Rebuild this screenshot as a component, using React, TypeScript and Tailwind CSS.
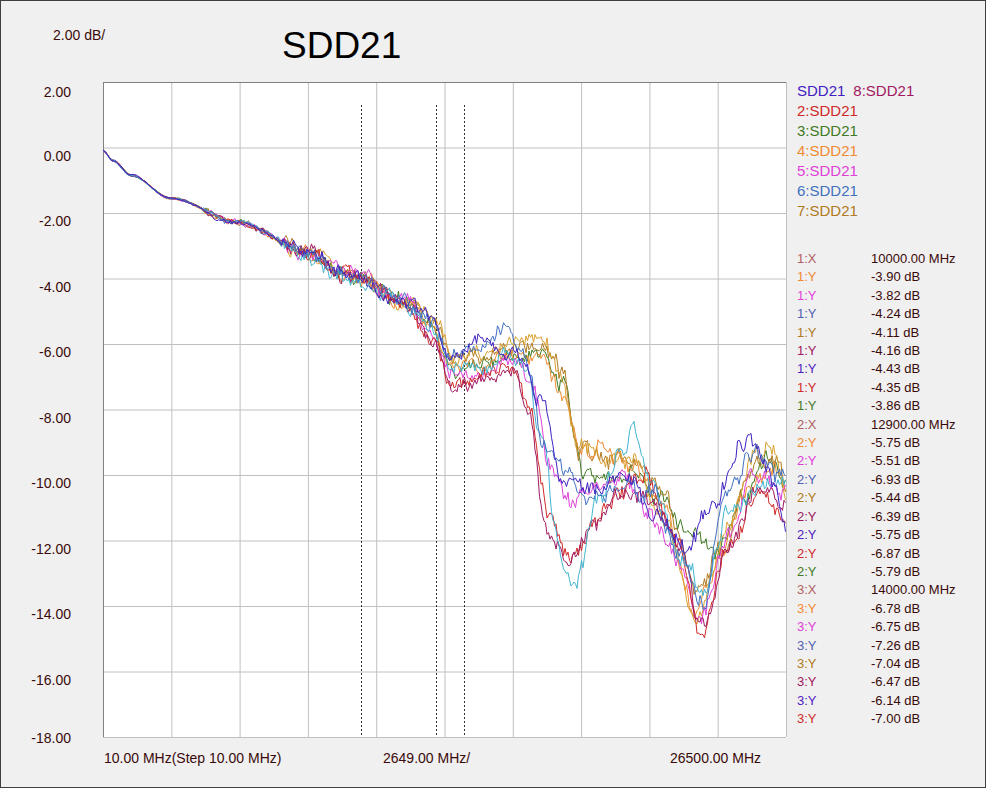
import React from "react"

const W = 683
const H = 655
const yOf = (db: number) => (2 - db) * 32.75

const common: [number, number][] = [
  [0, -0.1], [10, -0.4], [28, -0.85], [68, -1.55], [136, -2.3], [204, -3.2], [240, -3.8], [258, -4.0], [300, -4.7],
]

type Trace = { color: string; seed: number; pts: [number, number][] }

const traces: Trace[] = [
  { color: "#3f7a22", seed: 3, pts: [[330, -5.7], [350, -6.8], [380, -6.6], [420, -6.3], [440, -6.4], [460, -7.2], [480, -9.8], [500, -10.2], [530, -10.0], [560, -10.6], [590, -12.0], [615, -12.4], [640, -10.6], [665, -9.6], [683, -10.3]] },
  { color: "#b07a20", seed: 7, pts: [[330, -5.4], [350, -6.5], [380, -6.4], [410, -6.0], [440, -6.2], [460, -6.8], [475, -9.2], [500, -9.5], [530, -9.6], [560, -10.4], [595, -13.6], [620, -12.2], [650, -9.8], [675, -9.4], [683, -10.6]] },
  { color: "#f08a30", seed: 11, pts: [[330, -5.6], [350, -6.7], [380, -6.7], [410, -6.2], [440, -6.4], [460, -7.6], [480, -9.3], [500, -9.0], [530, -9.8], [560, -10.8], [592, -14.2], [615, -12.8], [645, -10.4], [670, -9.6], [683, -10.4]] },
  { color: "#d8a030", seed: 13, pts: [[330, -5.3], [350, -6.4], [380, -6.2], [410, -5.9], [440, -6.0], [455, -7.0], [478, -9.0], [500, -9.5], [530, -9.4], [560, -11.2], [595, -14.6], [620, -12.0], [650, -9.6], [672, -9.3], [683, -10.8]] },
  { color: "#e040d8", seed: 17, pts: [[330, -5.8], [350, -7.0], [380, -6.9], [410, -6.4], [430, -7.2], [445, -9.8], [470, -10.8], [500, -10.4], [520, -10.0], [545, -11.2], [575, -12.6], [598, -14.4], [625, -11.8], [650, -10.0], [683, -10.6]] },
  { color: "#d02828", seed: 19, pts: [[330, -5.9], [350, -7.2], [380, -6.9], [410, -6.7], [425, -7.8], [445, -11.2], [468, -12.6], [490, -11.6], [520, -10.4], [545, -10.2], [575, -12.0], [598, -14.8], [625, -12.2], [655, -10.6], [683, -11.2]] },
  { color: "#a01860", seed: 23, pts: [[330, -6.0], [350, -7.4], [380, -7.0], [410, -6.8], [425, -8.2], [445, -11.8], [465, -12.8], [490, -11.4], [520, -10.6], [550, -10.8], [578, -12.4], [598, -14.8], [625, -12.4], [655, -10.4], [683, -11.0]] },
  { color: "#40b4d0", seed: 29, pts: [[330, -5.5], [350, -6.6], [380, -6.8], [400, -6.2], [420, -6.6], [440, -9.0], [455, -12.0], [472, -13.4], [495, -10.8], [515, -9.4], [530, -8.6], [550, -10.4], [580, -12.6], [600, -13.6], [625, -11.2], [655, -10.4], [683, -10.2]] },
  { color: "#4070c0", seed: 31, pts: [[330, -5.2], [345, -6.4], [360, -6.0], [380, -6.2], [400, -5.5], [420, -6.2], [440, -8.8], [460, -9.8], [490, -10.6], [520, -10.4], [550, -10.6], [575, -12.4], [600, -13.8], [625, -10.4], [650, -9.4], [683, -10.0]] },
  { color: "#4020c0", seed: 37, pts: [[330, -5.0], [345, -6.3], [360, -6.1], [380, -5.8], [400, -6.0], [420, -6.4], [438, -7.8], [460, -10.2], [490, -10.6], [520, -10.0], [550, -11.2], [585, -12.2], [610, -11.0], [640, -9.0], [665, -9.6], [683, -11.6]] },
]

function rng(seed: number) {
  let s = seed * 9973 + 1
  return () => {
    s = (s * 16807) % 2147483647
    return s / 2147483647
  }
}

function buildPath(t: Trace) {
  const pts = [...common, ...t.pts]
  const r = rng(t.seed)
  const out: string[] = []
  let walk = 0
  let slow = 0
  for (let x = 0; x <= W; x += 1.5) {
    let i = 0
    while (i < pts.length - 2 && pts[i + 1][0] < x) i++
    const [x0, y0] = pts[i]
    const [x1, y1] = pts[i + 1]
    const f = Math.min(1, Math.max(0, (x - x0) / (x1 - x0)))
    const s = f * f * (3 - 2 * f)
    let db = y0 + (y1 - y0) * s
    const amp = x < 100 ? 0.03 : x < 180 ? 0.12 : x < 420 ? 0.3 : 0.4
    walk = walk * 0.6 + (r() - 0.5) * amp
    slow = slow * 0.93 + (r() - 0.5) * (x < 180 ? 0.01 : 0.09)
    db += walk + slow + (r() - 0.5) * amp * 0.6
    out.push(`${x.toFixed(1)},${yOf(db).toFixed(1)}`)
  }
  return out.join(" ")
}

const legend = [
  { n: "2:SDD21", c: "#d02828" },
  { n: "3:SDD21", c: "#3f7a22" },
  { n: "4:SDD21", c: "#f08a30" },
  { n: "5:SDD21", c: "#e040d8" },
  { n: "6:SDD21", c: "#4070c0" },
  { n: "7:SDD21", c: "#b07a20" },
]

const yColors = ["#f08a30", "#e040d8", "#5060b0", "#b07a20", "#a01860", "#5020c0", "#d02828", "#3f7a22"]
const markers: { l: string; v: string; c: string }[] = []
const groups = [
  { x: "10000.00 MHz", ys: ["-3.90", "-3.82", "-4.24", "-4.11", "-4.16", "-4.43", "-4.35", "-3.86"] },
  { x: "12900.00 MHz", ys: ["-5.75", "-5.51", "-6.93", "-5.44", "-6.39", "-5.75", "-6.87", "-5.79"] },
  { x: "14000.00 MHz", ys: ["-6.78", "-6.75", "-7.26", "-7.04", "-6.47", "-6.14", "-7.00"] },
]
groups.forEach((g, gi) => {
  markers.push({ l: `${gi + 1}:X`, v: g.x, c: "#b06060" })
  g.ys.forEach((v, i) => markers.push({ l: `${gi + 1}:Y`, v: `${v} dB`, c: yColors[i] }))
})

const yTicks = ["2.00", "0.00", "-2.00", "-4.00", "-6.00", "-8.00", "-10.00", "-12.00", "-14.00", "-16.00"]

export default function App() {
  return (
    <div className="w-[986px] h-[788px] bg-[#f0f0f0] border border-[#404040] text-[#3a0a0a] overflow-hidden" style={{ fontFamily: "'Liberation Sans', Arial, sans-serif" }}>
      <div className="h-[81px] flex items-start">
        <div className="w-[281px] pl-[52px] pt-[24px] text-[14px]">2.00 dB/</div>
        <div className="pt-[26px] text-[37px] text-black leading-none">SDD21</div>
      </div>
      <div className="flex">
        <div className="w-[102px] h-[656px] flex flex-col pr-[32px] items-end">
          {yTicks.map((t, i) => (
            <div key={t} className="h-[65.5px] shrink-0 text-[14px] leading-none" style={{ paddingTop: i === 0 ? 3 : 1 }}>
              {t}
            </div>
          ))}
          <div className="text-[14px] leading-none -mt-[6px]">-18.00</div>
        </div>
        <svg width={W + 1} height={H + 1} className="bg-white shrink-0">
          {Array.from({ length: 11 }).map((_, i) => (
            <line key={"v" + i} x1={i * 68.3 + 0.5} x2={i * 68.3 + 0.5} y1={0} y2={H} stroke="#c0c0c0" />
          ))}
          {Array.from({ length: 11 }).map((_, i) => (
            <line key={"h" + i} x1={0} x2={W} y1={i * 65.5 + 0.5} y2={i * 65.5 + 0.5} stroke="#c0c0c0" />
          ))}
          <line x1={0.5} x2={0.5} y1={0} y2={H} stroke="#808080" />
          <line x1={0} x2={W} y1={0.5} y2={0.5} stroke="#808080" />
          {[258.5, 333.5, 361.5].map((x) => (
            <line key={x} x1={x} x2={x} y1={23} y2={H} stroke="#303030" strokeDasharray="2 2" />
          ))}
          {traces.map((t) => (
            <polyline key={t.seed} points={buildPath(t)} fill="none" stroke={t.color} strokeWidth={1} />
          ))}
        </svg>
        <div className="flex-1 pl-[10px] text-[15px] leading-[20px] -mt-[1px]">
          <div className="flex gap-[8px]">
            <span className="text-[#4020c0]">SDD21</span>
            <span className="text-[#a01860]">8:SDD21</span>
          </div>
          {legend.map((l) => (
            <div key={l.n} style={{ color: l.c }}>{l.n}</div>
          ))}
          <div className="mt-[29px] text-[13px] leading-[18.4px]">
            {markers.map((m, i) => (
              <div key={i} className="flex">
                <span className="w-[74px]" style={{ color: m.c }}>{m.l}</span>
                <span className="text-[#3a0a0a]">{m.v}</span>
              </div>
            ))}
          </div>
        </div>
      </div>
      <div className="flex text-[14px] pt-[10px] pl-[103px]">
        <span className="w-[279px]">10.00 MHz(Step 10.00 MHz)</span>
        <span className="w-[287px]">2649.00 MHz/</span>
        <span>26500.00 MHz</span>
      </div>
    </div>
  )
}
